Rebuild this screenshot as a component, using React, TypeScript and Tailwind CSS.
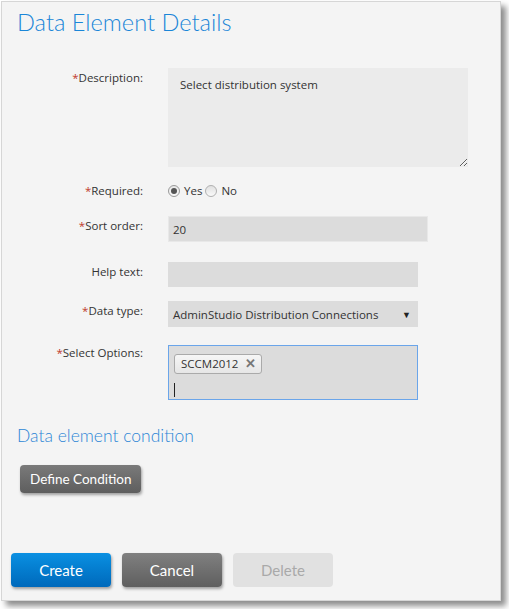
import React from 'react';

const body = { fontFamily: '"Open Sans", "Noto Sans", sans-serif' };
const lato = { fontFamily: 'Lato, "Open Sans", sans-serif' };

function Label({ text, required, pad }: { text: string; required?: boolean; pad: string }) {
  return (
    <div className={`w-[141px] shrink-0 text-right text-[11.5px] leading-4 text-[#333] ${pad}`}>
      {required && <span className="text-[#c0392b]">*</span>}
      {text}
    </div>
  );
}

export default function App() {
  return (
    <div className="w-[509px] h-[609px] bg-white relative" style={body}>
      <div className="absolute left-[1px] top-[1px] w-[500px] h-[600px] bg-[#f4f4f4] border border-[#d6d6d6] shadow-[5px_5px_6px_rgba(0,0,0,0.45)] flex flex-col">
        {/* Title */}
        <h1 className="ml-[15px] mt-[5px] text-[23.6px] leading-[30px] font-light text-[#1a86d8]" style={lato}>
          Data Element Details
        </h1>

        {/* Form rows */}
        <div className="mt-[31px] flex items-start">
          <Label text="Description:" required pad="pt-[2px]" />
          <textarea
            readOnly
            defaultValue="Select distribution system"
            className="ml-[25px] w-[300px] h-[99px] bg-[#ebebeb] px-[12px] py-[9px] text-[11.5px] leading-4 text-[#333] outline-none"
            style={body}
          />
        </div>

        <div className="mt-[15px] flex items-center">
          <Label text="Required:" required pad="" />
          <div className="ml-[25px] flex items-center text-[11.5px] text-[#333]">
            <span className="w-[12px] h-[12px] rounded-full border border-[#9a9a9a] bg-gradient-to-b from-[#e8e8e8] to-[#f8f8f8] flex items-center justify-center">
              <span className="w-[6px] h-[6px] rounded-full bg-[#555]" />
            </span>
            <span className="ml-[4px]">Yes</span>
            <span className="ml-[3px] w-[12px] h-[12px] rounded-full border border-[#b0b0b0] bg-gradient-to-b from-[#e0e0e0] to-[#fafafa]" />
            <span className="ml-[4px]">No</span>
          </div>
        </div>

        <div className="mt-[17px] flex items-start">
          <Label text="Sort order:" required pad="pt-[2px]" />
          <div className="ml-[25px] w-[260px] h-[26px] bg-[#dcdcdc] border border-[#e8e8e8] px-[4px] flex items-center text-[11.5px] text-[#333]">
            20
          </div>
        </div>

        <div className="mt-[20px] flex items-start">
          <Label text="Help text:" pad="pt-[2px]" />
          <div className="ml-[25px] w-[250px] h-[25px] bg-[#dcdcdc]" />
        </div>

        <div className="mt-[14px] flex items-start">
          <Label text="Data type:" required pad="pt-[2px]" />
          <div className="ml-[25px] w-[250px] h-[26px] bg-[#dcdcdc] pl-[5px] pr-[7px] flex items-center justify-between text-[11.5px] text-[#333]">
            <span>AdminStudio Distribution Connections</span>
            <span className="text-[9px] text-[#222]">▼</span>
          </div>
        </div>

        <div className="mt-[18px] flex items-start">
          <Label text="Select Options:" required pad="pt-0" />
          <div className="ml-[25px] w-[250px] h-[55px] bg-[#dcdcdc] border border-[#6aa5ea] px-[5px] pt-[4px]">
            <span className="inline-flex items-center h-[20px] border border-[#aaa] rounded-[3px] bg-gradient-to-b from-[#f6f6f6] to-[#e6e6e6] pl-[6px] pr-[5px] text-[11.5px] text-[#333]">
              SCCM2012
              <span className="ml-[7px] text-[13px] font-bold text-[#777] leading-none">✕</span>
            </span>
            <div className="mt-[9px] w-[1px] h-[14px] bg-[#222]" />
          </div>
        </div>

        {/* Condition section */}
        <h2 className="ml-[15px] mt-[25px] text-[17.5px] leading-[22px] font-light text-[#2c86d6]" style={lato}>
          Data element condition
        </h2>
        <div className="ml-[18px] mt-[18px]">
          <button
            className="h-[28px] px-[10px] rounded-[4px] bg-gradient-to-b from-[#7a7a7a] to-[#5e5e5e] text-white text-[13.5px] shadow-[1px_2px_3px_rgba(0,0,0,0.35)]"
            style={lato}
          >
            Define Condition
          </button>
        </div>

        {/* Footer buttons */}
        <div className="mt-auto mb-[13px] ml-[9px] flex gap-[11px]">
          <button
            className="w-[100px] h-[34px] rounded-[4px] bg-gradient-to-b from-[#0b90e2] to-[#0069bb] text-white text-[15px] shadow-[1px_2px_3px_rgba(0,0,0,0.35)]"
            style={lato}
          >
            Create
          </button>
          <button
            className="w-[100px] h-[34px] rounded-[4px] bg-gradient-to-b from-[#808080] to-[#5f5f5f] text-white text-[15px] shadow-[1px_2px_3px_rgba(0,0,0,0.35)]"
            style={lato}
          >
            Cancel
          </button>
          <button
            className="w-[100px] h-[34px] rounded-[4px] bg-[#e1e1e1] text-[#a9a9a9] text-[15px]"
            style={lato}
          >
            Delete
          </button>
        </div>
      </div>
    </div>
  );
}
